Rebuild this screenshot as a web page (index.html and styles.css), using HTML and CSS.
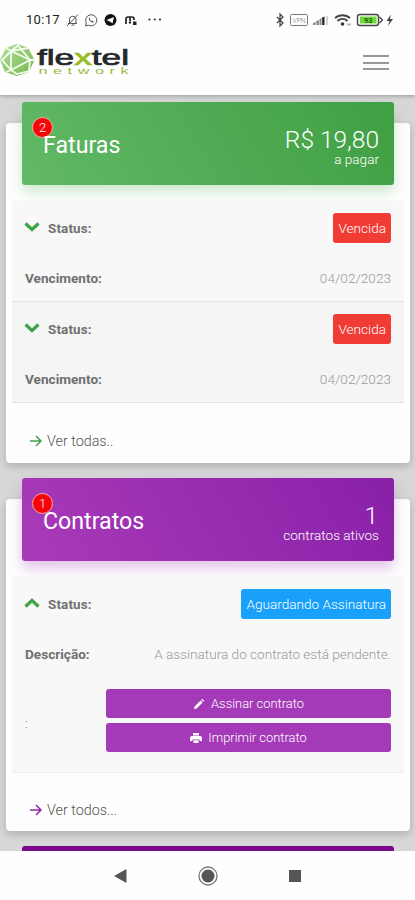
FILE: index.html
```html
<!DOCTYPE html>
<html lang="pt-BR">
<head>
<meta charset="utf-8">
<title>Flextel Network</title>
<link rel="stylesheet" href="styles.css">
</head>
<body>
<div class="status-bar">
  <span class="clock">10:17</span>
  <svg class="status-left" width="100" height="16" viewBox="0 0 100 16" fill="none" stroke="#555" stroke-width="1">
    <path d="M3 11.5h9M4.5 11V7a3.3 3.3 0 0 1 6.500 0v4M6.500 13h3M2 14L13 2.500"/>
    <path d="M20.500 14l.8-3a5.600 5.600 0 1 1 2.200 2.200z"/><path d="M24 5.500c-1 3 3 6 5 4.500l-1.500-1.500-1 .7-1.800-1.800.7-1z" fill="#555" stroke="none"/>
    <circle cx="45.500" cy="8" r="6" fill="#111" stroke="none"/><path d="M41.500 8l7.500-3-1.500 6.500-2.500-2z" fill="#fff" stroke="none"/>
    <path d="M61 12V7q0-2 2-2h4q2 0 2 2v1M65 5v4" stroke="#222" stroke-width="1.700"/><circle cx="65" cy="10.500" r="1.200" fill="#222" stroke="none"/><rect x="68" y="9.500" width="3.500" height="3.500" fill="#222" stroke="none"/>
    <g fill="#333" stroke="none"><circle cx="84.500" cy="7.500" r="1.100"/><circle cx="89.800" cy="7.500" r="1.100"/><circle cx="95" cy="7.500" r="1.100"/></g>
  </svg>
  <svg class="status-right" width="122" height="16" viewBox="0 0 122 16" fill="none" stroke="#444">
    <path d="M3 5l6 6-3 3V2l3 3-6 6" stroke-width="1.200"/>
    <rect x="16.500" y="2.500" width="17" height="11" rx="1" stroke="#777"/>
    <text class="vpn" x="18.500" y="11.300" textLength="13" lengthAdjust="spacingAndGlyphs">VPN</text>
    <g fill="#888" stroke="none"><path d="M39 13v-2l2.500-1V13zM42.300 13V9l2.500-1V13zM45.500 13V7l2-1V13z"/><path d="M48.200 13V5.500l2.300-1V13z" fill="#222"/><path d="M52.500 13V4h1v9z" fill="#aaa"/></g>
    <path d="M61 6.200a11 11 0 0 1 15 0M63.500 9a7 7 0 0 1 10 0" stroke-width="1.800"/><circle cx="68.500" cy="12" r="1.800" fill="#333" stroke="none"/><path d="M73 11.500h4v2h-4z" fill="#bbb" stroke="none"/>
    <rect x="83.500" y="2.500" width="21" height="11" rx="2.500" stroke="#444" stroke-width="1.400"/><path d="M105.500 5l3 3-3 3" stroke-width="1.300"/>
    <rect x="86" y="4.500" width="16.500" height="7" fill="#6fdc35" stroke="none"/><text class="battery" x="90" y="10.800">93</text>
    <path d="M117 2.500L112.500 9h3L114 14l5-7h-3z" fill="#444" stroke="none"/>
  </svg>
</div>
<header class="topbar">
  <svg class="logo" width="134" height="36" viewBox="0 0 134 36">
    <defs><linearGradient id="globe" x1="0" y1="0" x2="1" y2="1"><stop offset="0" stop-color="#b3de9c"/><stop offset="1" stop-color="#74b94e"/></linearGradient></defs>
    <path d="M17 1L28 4.500 34.500 17 29 29l-12 4L5 29 0 17 6 5z" fill="url(#globe)"/>
    <path d="M11 8v19M11 8l19 9-19 10M11 8L2 17l9 10M11 8l7-5.500L30 17l-1 11-12 3-6-4M11 8l17-3M30 17l4.500 0M11 27l-5 2M11 8L6 5" fill="none" stroke="#f4fcee" stroke-width="1.800"/>
    <text class="wordmark" x="37" y="21.500" textLength="92" lengthAdjust="spacingAndGlyphs">fle<tspan class="lime">x</tspan>tel</text>
    <text class="subtitle" transform="translate(38.500 30.500) scale(1.800 1)" x="0" y="0" textLength="50" lengthAdjust="spacing">network</text>
  </svg>
  <div class="menu"><i></i><i></i><i></i></div>
</header>
<main>
  <section class="card bills">
    <div class="card-head green">
      <h2>Faturas<span class="badge">2</span></h2>
      <div class="summary"><strong>R$ 19,80</strong><span>a pagar</span></div>
    </div>
    <div class="table">
      <div class="entry">
        <div class="row"><svg class="chevron" viewBox="0 0 16 10"><path d="M1.500 1.500L8 7.500l6.500-6"/></svg><b class="label status">Status:</b><span class="tag red">Vencida</span></div>
        <div class="row"><b class="label due">Vencimento:</b><span class="value date">04/02/2023</span></div>
      </div>
      <div class="entry alt">
        <div class="row"><svg class="chevron" viewBox="0 0 16 10"><path d="M1.500 1.500L8 7.500l6.500-6"/></svg><b class="label status">Status:</b><span class="tag red">Vencida</span></div>
        <div class="row"><b class="label due">Vencimento:</b><span class="value date">04/02/2023</span></div>
      </div>
    </div>
    <div class="more"><svg viewBox="0 0 12 12"><path d="M0 6h11M6 1l5 5-5 5"/></svg><span>Ver todas..</span></div>
  </section>
  <section class="card contracts">
    <div class="card-head purple">
      <h2>Contratos<span class="badge">1</span></h2>
      <div class="summary"><strong class="count">1</strong><span>contratos ativos</span></div>
    </div>
    <div class="table">
      <div class="entry">
        <div class="row"><svg class="chevron" viewBox="0 0 16 10"><path d="M1.500 8.500L8 2.500l6.500 6"/></svg><b class="label status">Status:</b><span class="tag blue">Aguardando Assinatura</span></div>
        <div class="row"><b class="label">Descrição:</b><span class="value">A assinatura do contrato está pendente.</span></div>
        <div class="row actions"><span class="colon">:</span>
          <div class="buttons">
            <div class="button"><svg viewBox="0 0 12 12"><path d="M1 11l.6-2.600 6-6 2 2-6 6zM8.300 1.700l.9-.9 2 2-.9.9z"/></svg><span>Assinar contrato</span></div>
            <div class="button"><svg viewBox="0 0 12 12"><path d="M3 1h6v2.500H3zM2 4h8a2 2 0 0 1 2 2v3H9.500V7.500h-7V9H0V6a2 2 0 0 1 2-2zM3.500 8.200h5V11h-5z"/></svg><span>Imprimir contrato</span></div>
          </div>
        </div>
      </div>
    </div>
    <div class="more violet"><svg viewBox="0 0 12 12"><path d="M0 6h11M6 1l5 5-5 5"/></svg><span>Ver todos...</span></div>
  </section>
  <div class="next-head"></div>
</main>
<nav class="navbar">
  <svg width="14" height="14" viewBox="0 0 14 14"><path d="M0 7l12.500-7v14z"/></svg>
  <svg width="20" height="20" viewBox="0 0 20 20"><circle cx="10" cy="10" r="9" fill="none" stroke="#777" stroke-width="1.300"/><circle cx="10" cy="10" r="6.500"/></svg>
  <svg width="14" height="14" viewBox="0 0 14 14"><path d="M1 1h12v12H1z"/></svg>
</nav>
</body>
</html>
```

FILE: styles.css
```css
* { box-sizing: border-box; }
body {
  margin: 0; width: 415px; height: 900px; overflow: hidden;
  display: flex; flex-direction: column;
  font-family: Roboto, sans-serif; font-size: 13.6px; font-weight: 300;
  background: #fefefe; color: #555;
}
svg { flex: none; display: block; }
.status-bar { height: 38px; flex: none; display: flex; align-items: center; padding: 1px 19px 0 26px; background: #fefefe; position: relative; z-index: 3; }
.clock { width: 39px; font-size: 13px; font-weight: 400; letter-spacing: .3px; color: #222; }
.status-right { margin-left: auto; }
.vpn { font-size: 8px; fill: #777; stroke: none; }
.battery { font-size: 7.5px; font-weight: 700; fill: #285b16; stroke: none; }
.topbar {
  height: 57px; flex: none; display: flex; justify-content: space-between;
  padding: 5px 26px 0 0; background: #fefefe; position: relative; z-index: 2;
  box-shadow: 0 1px 4px rgba(0,0,0,.3);
}
.wordmark { font-family: "Liberation Sans", sans-serif; font-size: 22.5px; fill: #252829; stroke: #252829; stroke-width: .7; }
.lime { fill: #94bd1e; stroke: #94bd1e; }
.subtitle { font-family: "Liberation Sans", sans-serif; font-size: 9px; fill: #94bd42; }
.menu { width: 26px; display: flex; flex-direction: column; gap: 4.5px; padding-top: 12px; }
.menu i { height: 2px; background: #999; }
main { height: 756px; flex: none; overflow: hidden; background: #d7d7d7; padding: 28px 5px 0 6px; }
.card { background: #fefefe; border-radius: 4px; box-shadow: 0 3px 8px rgba(0,0,0,.2); padding: 0 6px; }
.bills { height: 340px; margin-bottom: 36px; }
.contracts { height: 332px; margin-bottom: 15px; }
.card-head {
  height: 83px; position: relative; top: -21px; margin: 0 10px -5px;
  border-radius: 3px; display: flex; justify-content: space-between; padding: 0 15px 0 21px; color: #fff;
}
.green { background: linear-gradient(60deg, #62b966, #3f9f43); box-shadow: 0 7px 14px rgba(76,175,80,.28); }
.purple { background: linear-gradient(60deg, #a93bb9, #8820a7); box-shadow: 0 7px 14px rgba(156,39,176,.28); }
h2 { margin: 29px 0 0; font-size: 23.2px; line-height: 29px; font-weight: 400; position: relative; }
.badge {
  position: absolute; left: -11px; top: -14px; width: 21px; height: 21px; border-radius: 50%;
  background: #f60408; border: 1px solid #f6b0a0; color: #fff;
  font-size: 13px; line-height: 19px; font-weight: 300; text-align: center;
  z-index: -1;
}
.card-head { z-index: 0; }
.summary { display: flex; flex-direction: column; align-items: flex-end; padding-top: 25px; }
.summary strong { font-size: 24.5px; line-height: 25px; font-weight: 300; }
.summary .count { padding-right: 1px; }
.summary span { line-height: 14px; }
.table { color: #707070; }
.entry { background: #f8f8f8; border-bottom: 1px solid #e4e4e4; height: 101px; padding: 2px 13px 0; }
.alt { background: #f5f5f5; }
.row { height: 50px; display: flex; align-items: center; }
.chevron { width: 16px; height: 10px; margin: -3px 8px 0 -1px; fill: none; stroke: #3fa34a; stroke-width: 3.2; }
.label { font-weight: 700; }
.status { font-size: 13.4px; letter-spacing: .15px; }
.tag { margin-left: auto; height: 30px; line-height: 30px; padding: 0 5px; border-radius: 3px; color: #fff; }
.red { background: #f03c35; }
.blue { background: #18a0fb; }
.value { margin-left: auto; color: #999; }
.more { display: flex; align-items: center; height: 20px; margin: 28px 18px 0; font-size: 14.3px; }
.more svg { width: 12px; height: 12px; margin-right: 5px; fill: none; stroke: #43a047; stroke-width: 1.5; }
.violet { margin-top: 27px; }
.violet svg { stroke: #8e24aa; }
.contracts .entry { height: 196px; border-bottom: 1px solid #eee; }
.contracts .actions { height: 91px; margin-top: -4px; }
.contracts .colon { width: 81px; padding-top: 5px; }
.buttons { flex: 1; display: flex; flex-direction: column; gap: 5px; }
.button { height: 29px; display: flex; align-items: center; justify-content: center; gap: 6px; background: #a43ab7; border-radius: 3px; color: #fff; font-size: 12.9px; }
.button svg { width: 12px; height: 12px; fill: #fff; }
.next-head { height: 60px; margin: 0 16px; border-radius: 3px; background: #7d078c; }
.navbar { height: 49px; flex: none; display: flex; justify-content: center; align-items: center; gap: 70px; background: #fefefe; fill: #555; position: relative; }
```
